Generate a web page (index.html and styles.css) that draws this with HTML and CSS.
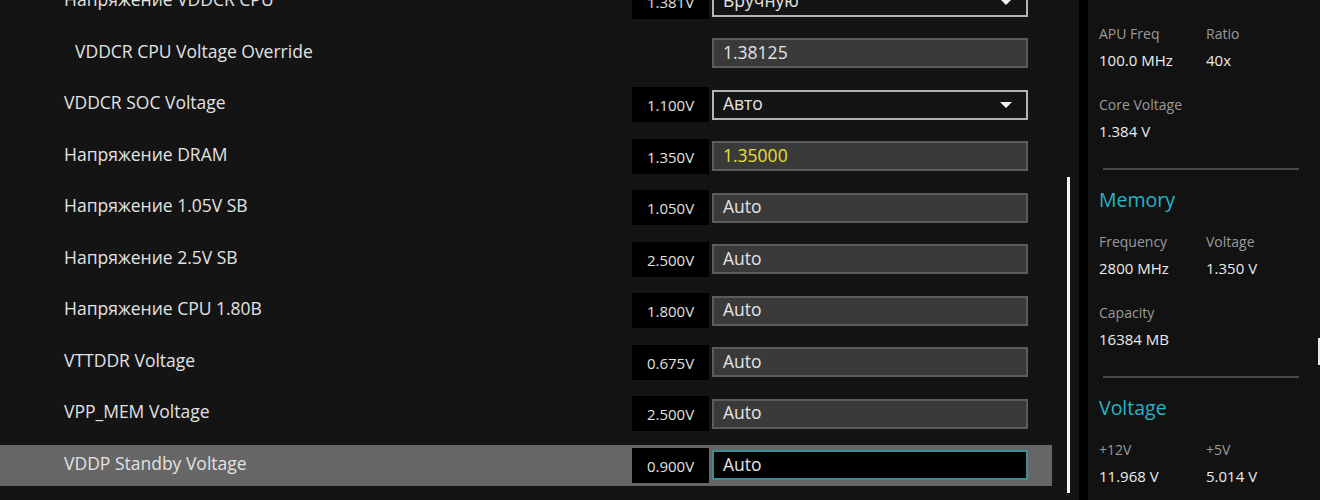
FILE: index.html
```html
<!DOCTYPE html>
<html lang="ru">
<head>
    <meta charset="UTF-8">
    <meta name="viewport" content="width=device-width, initial-scale=1.0">
    <title>Extreme Tweaker</title>
    <link rel="stylesheet" href="styles.css">
</head>
<body>
<div class="page">
    <div class="main">
        <div class="list">
            <div class="row">
                <div class="label">Напряжение VDDCR CPU</div>
                <div class="val">1.381V</div>
                <div class="field select">Вручную<span class="arrow"></span></div>
            </div>
            <div class="row">
                <div class="label sub">VDDCR CPU Voltage Override</div>
                <div class="val empty"></div>
                <div class="field text">1.38125</div>
            </div>
            <div class="row">
                <div class="label">VDDCR SOC Voltage</div>
                <div class="val">1.100V</div>
                <div class="field select">Авто<span class="arrow"></span></div>
            </div>
            <div class="row">
                <div class="label">Напряжение DRAM</div>
                <div class="val">1.350V</div>
                <div class="field text changed">1.35000</div>
            </div>
            <div class="row">
                <div class="label">Напряжение 1.05V SB</div>
                <div class="val">1.050V</div>
                <div class="field text">Auto</div>
            </div>
            <div class="row">
                <div class="label">Напряжение 2.5V SB</div>
                <div class="val">2.500V</div>
                <div class="field text">Auto</div>
            </div>
            <div class="row">
                <div class="label">Напряжение CPU 1.80В</div>
                <div class="val">1.800V</div>
                <div class="field text">Auto</div>
            </div>
            <div class="row">
                <div class="label">VTTDDR Voltage</div>
                <div class="val">0.675V</div>
                <div class="field text">Auto</div>
            </div>
            <div class="row">
                <div class="label">VPP_MEM Voltage</div>
                <div class="val">2.500V</div>
                <div class="field text">Auto</div>
            </div>
            <div class="row active">
                <div class="label">VDDP Standby Voltage</div>
                <div class="val">0.900V</div>
                <div class="field text focus">Auto</div>
            </div>
        </div>
        <div class="track">
            <div class="thumb"></div>
        </div>
    </div>

    <div class="sep"></div>

    <div class="side">
        <div class="side-body">
            <div class="pair">
                <div class="stat">
                    <div class="name">APU Freq</div>
                    <div class="num">100.0 MHz</div>
                </div>
                <div class="stat">
                    <div class="name">Ratio</div>
                    <div class="num">40x</div>
                </div>
            </div>
            <div class="pair">
                <div class="stat">
                    <div class="name">Core Voltage</div>
                    <div class="num">1.384 V</div>
                </div>
            </div>
            <hr class="divider">
            <h2 class="group">Memory</h2>
            <div class="pair">
                <div class="stat">
                    <div class="name">Frequency</div>
                    <div class="num">2800 MHz</div>
                </div>
                <div class="stat">
                    <div class="name">Voltage</div>
                    <div class="num">1.350 V</div>
                </div>
            </div>
            <div class="pair">
                <div class="stat">
                    <div class="name">Capacity</div>
                    <div class="num">16384 MB</div>
                </div>
            </div>
            <hr class="divider">
            <h2 class="group">Voltage</h2>
            <div class="pair">
                <div class="stat">
                    <div class="name">+12V</div>
                    <div class="num">11.968 V</div>
                </div>
                <div class="stat">
                    <div class="name">+5V</div>
                    <div class="num">5.014 V</div>
                </div>
            </div>
        </div>
        <div class="side-track">
            <div class="side-thumb"></div>
        </div>
    </div>
</div>
</body>
</html>
```

FILE: styles.css
```css
body {
    margin: 0;
    background: #131313;
    font-family: "Open Sans", "Noto Sans", sans-serif;
    color: #e4e4e4;
    overflow: hidden;
}

.page {
    display: flex;
    height: 500px;
}

.main {
    width: 1079px;
    flex-shrink: 0;
    display: flex;
    background: #141414;
}

.list {
    width: 1052px;
    display: flex;
    flex-direction: column;
    gap: 10.5px;
    margin-top: -19px;
}

.row {
    height: 41px;
    display: flex;
    align-items: center;
    flex-shrink: 0;
}

.row.active {
    background: #666;
}

.label {
    width: 568px;
    padding-left: 64px;
    padding-bottom: 5px;
    font-size: 17.5px;
    line-height: 24px;
    color: #e2e2e2;
}

.label.sub {
    padding-left: 75px;
    width: 557px;
}

.val {
    width: 77px;
    height: 35px;
    background: #000;
    font-size: 15px;
    line-height: 37px;
    text-align: center;
    color: #e0e0e0;
}

.val.empty {
    background: none;
}

.field {
    box-sizing: border-box;
    width: 316px;
    height: 30px;
    margin-left: 3px;
    padding: 0 0 3px 9px;
    font-size: 17.5px;
    line-height: 24px;
    display: flex;
    align-items: center;
}

.field.select {
    border: 2px solid #b4b4b4;
    background: #141414;
}

.field.text {
    border: 2px solid #5c5c5c;
    background: #3a3a3a;
}

.field.changed {
    color: #e8e02a;
}

.field.focus {
    border-color: #3c8d90;
    background: #000;
}

.arrow {
    margin: 3px 14px 0 auto;
    width: 0;
    height: 0;
    border-left: 6px solid transparent;
    border-right: 6px solid transparent;
    border-top: 6px solid #f2f2f2;
}

.track {
    flex: 1;
    padding-left: 15px;
}

.thumb {
    width: 3px;
    height: 316px;
    margin-top: 177px;
    background: #f4f4f4;
}

.sep {
    width: 9px;
    flex-shrink: 0;
    background: #000;
}

.side {
    flex: 1;
    min-width: 0;
    display: flex;
    background: #121212;
}

.side-body {
    flex: 1;
    min-width: 0;
    padding: 21px 19px 0 11px;
}

.pair {
    display: flex;
    margin-bottom: 19px;
}

.stat {
    width: 107px;
    flex-shrink: 0;
}

.name {
    font-size: 14px;
    line-height: 26px;
    color: #9a9a9a;
}

.num {
    font-size: 15px;
    line-height: 26px;
    color: #ececec;
}

.divider {
    border: 0;
    height: 2px;
    background: #4a4a4a;
    margin: 24px 0 0 4px;
}

.group {
    margin: 16px 0 15px;
    font-size: 19.5px;
    line-height: 28px;
    font-weight: normal;
    color: #26b3c6;
}

.side-track {
    width: 2px;
    flex-shrink: 0;
}

.side-thumb {
    height: 27px;
    margin-top: 338px;
    background: #e8e8e8;
}
```
